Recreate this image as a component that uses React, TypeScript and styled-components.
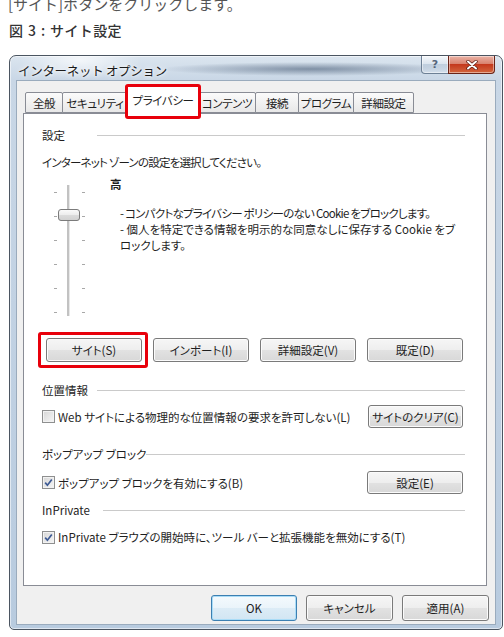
import styled, { createGlobalStyle } from "styled-components";

const GlobalStyle = createGlobalStyle`
  html, body {
    margin: 0;
    padding: 0;
    background: #fff;
  }
  body {
    font-family: "Noto Sans CJK JP", "Noto Sans", sans-serif;
    color: #1e1e1e;
  }
`;

const Page = styled.div`
  width: 504px;
  height: 637px;
  overflow: hidden;
  display: flex;
  flex-direction: column;
`;

const Lead = styled.p`
  margin: -7px 0 0 8px;
  font-size: 15px;
  line-height: 22px;
  color: #555;
  white-space: nowrap;
`;

const Caption = styled.p`
  margin: 4px 0 0 9px;
  font-size: 14px;
  line-height: 22px;
  font-weight: 500;
  letter-spacing: 0.4px;
  word-spacing: 1px;
  color: #333;
`;

const Window = styled.div`
  margin: 14px 0 0 9px;
  width: 494px;
  height: 575px;
  box-sizing: border-box;
  border: 1px solid #4b5561;
  border-radius: 7px 7px 5px 5px;
  padding: 0 6px 4px;
  display: flex;
  flex-direction: column;
  font-feature-settings: "palt";
  box-shadow: inset 0 0 0 1px rgba(255, 255, 255, 0.55);
  background:
    radial-gradient(ellipse 150px 7px at 300px 13px, rgba(72, 92, 118, 0.6), rgba(72, 92, 118, 0) 100%),
    radial-gradient(ellipse 60px 20px at 70px 4px, rgba(255, 255, 255, 0.7), rgba(255, 255, 255, 0) 100%),
    linear-gradient(#dbe5ef 0%, #c9d7e6 24px, #b8cbdf 100%);
`;

const TitleBar = styled.div`
  height: 24px;
  margin: 0 -6px;
  padding: 0 7px 0 8px;
  display: flex;
  align-items: flex-start;
`;

const Title = styled.span`
  padding-top: 7px;
  font-size: 12.5px;
  line-height: 16px;
  color: #1b1b1b;
  text-shadow: 0 0 6px #fff, 0 0 3px #fff;
  white-space: nowrap;
  font-feature-settings: normal;
  letter-spacing: -0.3px;
`;

const CaptionButtons = styled.div`
  margin-left: auto;
  display: flex;
`;

const CaptionButton = styled.div<{ $close?: boolean }>`
  width: ${(p) => (p.$close ? 47 : 28)}px;
  height: 18px;
  box-sizing: border-box;
  border: 1px solid ${(p) => (p.$close ? "#6a2418" : "#6d8095")};
  border-top: none;
  border-radius: ${(p) => (p.$close ? "0 0 4px 0" : "0 0 0 4px")};
  margin-left: ${(p) => (p.$close ? -1 : 0)}px;
  display: flex;
  align-items: center;
  justify-content: center;
  font-family: "DejaVu Sans", sans-serif;
  font-size: 11px;
  font-weight: 700;
  color: #55657a;
  box-shadow: inset 0 0 0 1px rgba(255, 255, 255, 0.45);
  background: ${(p) =>
    p.$close
      ? "linear-gradient(#eab3a6 0%, #d9836f 45%, #c4391d 50%, #d3673f 100%)"
      : "linear-gradient(rgba(255,255,255,0.7) 0%, rgba(224,232,241,0.6) 45%, rgba(183,199,216,0.7) 50%, rgba(214,225,237,0.8) 100%)"};
`;

const Client = styled.div`
  flex: 1;
  background: #f0f0f0;
  border: 1px solid #9aabbd;
  padding: 5px 6px 3px;
  display: flex;
  flex-direction: column;
`;

const TabRow = styled.div`
  height: 28px;
  margin-bottom: -1px;
  padding-left: 2px;
  display: flex;
  align-items: flex-start;
  position: relative;
  z-index: 1;
`;

const Tab = styled.div<{ $w: number; $active?: boolean }>`
  position: relative;
  box-sizing: border-box;
  width: ${(p) => p.$w + (p.$active ? 4 : 0)}px;
  height: ${(p) => (p.$active ? 28 : 21)}px;
  margin: ${(p) => (p.$active ? "0 -2px 0 -3px" : "6px 0 0 -1px")};
  padding-top: ${(p) => (p.$active ? 5 : 2)}px;
  border: 1px solid #898c95;
  border-bottom: ${(p) => (p.$active ? "none" : "1px solid #898c95")};
  border-radius: 2px 2px 0 0;
  background: ${(p) => (p.$active ? "#fff" : "linear-gradient(#fbfbfb, #e8e8e8)")};
  z-index: ${(p) => (p.$active ? 2 : 0)};
  font-size: 11.5px;
  line-height: 16px;
  letter-spacing: -0.4px;
  text-align: center;
  white-space: nowrap;

  &:first-child {
    margin-left: 0;
  }

  ${(p) =>
    p.$active &&
    `
    &::after {
      content: "";
      position: absolute;
      top: -3px;
      left: -1px;
      right: -1px;
      bottom: -5px;
      border: 3px solid #e8000b;
      border-radius: 3px;
    }
  `}
`;

const Panel = styled.div`
  height: 473px;
  box-sizing: border-box;
  margin-right: 2px;
  background: #fff;
  border: 1px solid #898c95;
  padding: 13px 21px 0 18px;
  display: flex;
  flex-direction: column;
  font-size: 11.5px;
  line-height: 16px;
`;

const GroupHeader = styled.div<{ $mt: number; $gap?: number }>`
  margin-top: ${(p) => p.$mt}px;
  height: 16px;
  display: flex;
  align-items: center;

  span {
    min-width: 55px;
    margin-right: ${(p) => p.$gap ?? 0}px;
    white-space: nowrap;
  }

  &::after {
    content: "";
    flex: 1;
    border-top: 1px solid #cacaca;
  }
`;

const Intro = styled.div`
  margin-top: 11px;
  white-space: nowrap;
  letter-spacing: -0.8px;
`;

const SliderArea = styled.div`
  margin-top: 6px;
  display: flex;
`;

const SliderSvg = styled.svg`
  margin-left: 6px;
  flex: none;
`;

const LevelText = styled.div`
  margin-left: 22px;
`;

const Level = styled.div`
  font-weight: 700;
`;

const Description = styled.div`
  margin-top: 13px;
  padding-left: 10px;
`;

const DescLine = styled.div<{ $tight?: boolean }>`
  white-space: nowrap;
  letter-spacing: ${(p) => (p.$tight ? -0.75 : 0)}px;
`;

const ButtonRow = styled.div`
  margin-top: 20px;
  padding-left: 4px;
  display: grid;
  grid-template-columns: repeat(4, 96px);
  column-gap: 11px;
`;

const Button = styled.div<{ $w?: number; $h?: number; $default?: boolean; $marked?: boolean }>`
  position: relative;
  box-sizing: border-box;
  width: ${(p) => (p.$w ? `${p.$w}px` : "auto")};
  height: ${(p) => p.$h ?? 23}px;
  border: 1px solid ${(p) => (p.$default ? "#3c7fb1" : "#7a7a7a")};
  border-radius: 3px;
  display: flex;
  align-items: center;
  justify-content: center;
  font-size: 11.5px;
  color: #1e1e1e;
  white-space: nowrap;
  flex: none;
  box-shadow: inset 0 0 0 1px ${(p) => (p.$default ? "#a9dcf7" : "#fbfbfb")};
  background: ${(p) =>
    p.$default
      ? "linear-gradient(#f4fafd 0%, #eaf4fa 50%, #dcecf6 50%, #d2e6f3 100%)"
      : "linear-gradient(#f6f6f6 0%, #eeeeee 50%, #e2e2e2 50%, #d8d8d8 100%)"};

  ${(p) =>
    p.$marked &&
    `
    &::after {
      content: "";
      position: absolute;
      top: -7px;
      bottom: -7px;
      left: -9px;
      right: -7px;
      border: 3px solid #e8000b;
      border-radius: 3px;
    }
  `}
`;

const CheckRow = styled.div<{ $mt: number; $h?: number }>`
  margin-top: ${(p) => p.$mt}px;
  height: ${(p) => p.$h ?? 23}px;
  display: flex;
  align-items: center;
  white-space: nowrap;

  ${Button} {
    margin-left: auto;
    margin-right: 2px;
  }
`;

const CheckBox = styled.span`
  flex: none;
  width: 13px;
  height: 13px;
  box-sizing: border-box;
  margin-right: 3px;
  border: 1px solid #8e8f8f;
  background: linear-gradient(135deg, #d6d6d6, #f6f6f6);
  box-shadow: inset 0 0 0 1px #f2f2f2;
  display: flex;
  align-items: center;
  justify-content: center;
`;

const DialogButtons = styled.div`
  margin-top: 9px;
  display: flex;
  justify-content: flex-end;
  gap: 9px;
`;

const tabs: { label: string; w: number; active?: boolean }[] = [
  { label: "全般", w: 38 },
  { label: "セキュリティ", w: 66 },
  { label: "プライバシー", w: 72, active: true },
  { label: "コンテンツ", w: 58 },
  { label: "接続", w: 44 },
  { label: "プログラム", w: 56 },
  { label: "詳細設定", w: 61 },
];

const ticks = [16, 40, 64, 88, 112, 136];

function Check({ checked }: { checked?: boolean }) {
  return (
    <CheckBox>
      {checked && (
        <svg width="9" height="9" viewBox="0 0 9 9">
          <path d="M1.2 4.6 L3.4 7.2 L7.8 1.4" fill="none" stroke="#3d5a94" strokeWidth="1.7" />
        </svg>
      )}
    </CheckBox>
  );
}

function PrivacySlider() {
  return (
    <SliderSvg width="40" height="142" viewBox="0 0 40 142">
      <defs>
        <linearGradient id="thumb" x1="0" y1="0" x2="0" y2="1">
          <stop offset="0" stopColor="#fbfbfb" />
          <stop offset="0.5" stopColor="#ececec" />
          <stop offset="0.5" stopColor="#dcdcdc" />
          <stop offset="1" stopColor="#d0d0d0" />
        </linearGradient>
      </defs>
      <rect x="19" y="9" width="2" height="131" fill="#c2c2c2" />
      <rect x="21" y="9" width="1" height="131" fill="#e8e8e8" />
      {ticks.map((y) => (
        <g key={y} fill="#a8a8a8">
          <rect x="6" y={y} width="3" height="1" />
          <rect x="34" y={y} width="3" height="1" />
        </g>
      ))}
      <rect x="10.5" y="33.5" width="21" height="11" rx="2.5" fill="url(#thumb)" stroke="#7b7b7b" />
    </SliderSvg>
  );
}

export default function App() {
  return (
    <Page>
      <GlobalStyle />
      <Lead>[サイト]ボタンをクリックします。</Lead>
      <Caption>図 3 : サイト設定</Caption>

      <Window>
        <TitleBar>
          <Title>インターネット オプション</Title>
          <CaptionButtons>
            <CaptionButton>?</CaptionButton>
            <CaptionButton $close>
              <svg width="12" height="10" viewBox="0 0 12 10">
                <path d="M2 1.5 L10 8.5 M10 1.5 L2 8.5" stroke="#5a1a10" strokeWidth="3.4" strokeLinecap="round" />
                <path d="M2 1.5 L10 8.5 M10 1.5 L2 8.5" stroke="#fff" strokeWidth="2" strokeLinecap="round" />
              </svg>
            </CaptionButton>
          </CaptionButtons>
        </TitleBar>

        <Client>
          <TabRow>
            {tabs.map((t) => (
              <Tab key={t.label} $w={t.w} $active={t.active}>
                {t.label}
              </Tab>
            ))}
          </TabRow>

          <Panel>
            <GroupHeader $mt={0}>
              <span>設定</span>
            </GroupHeader>
            <Intro>インターネット ゾーンの設定を選択してください。</Intro>

            <SliderArea>
              <PrivacySlider />
              <LevelText>
                <Level>高</Level>
                <Description>
                  <DescLine $tight>- コンパクトなプライバシー ポリシーのない Cookie をブロックします。</DescLine>
                  <DescLine>- 個人を特定できる情報を明示的な同意なしに保存する Cookie をブ</DescLine>
                  <DescLine>ロックします。</DescLine>
                </Description>
              </LevelText>
            </SliderArea>

            <ButtonRow>
              <Button $h={24} $marked>サイト(S)</Button>
              <Button $h={24}>インポート(I)</Button>
              <Button $h={24}>詳細設定(V)</Button>
              <Button $h={24}>既定(D)</Button>
            </ButtonRow>

            <GroupHeader $mt={20}>
              <span>位置情報</span>
            </GroupHeader>
            <CheckRow $mt={7}>
              <Check />
              Web サイトによる物理的な位置情報の要求を許可しない(L)
              <Button $w={95}>サイトのクリア(C)</Button>
            </CheckRow>

            <GroupHeader $mt={18}>
              <span>ポップアップ ブロック</span>
            </GroupHeader>
            <CheckRow $mt={9}>
              <Check checked />
              ポップアップ ブロックを有効にする(B)
              <Button $w={96}>設定(E)</Button>
            </CheckRow>

            <GroupHeader $mt={8} $gap={6}>
              <span>InPrivate</span>
            </GroupHeader>
            <CheckRow $mt={11} $h={16}>
              <Check checked />
              InPrivate ブラウズの開始時に、ツール バーと拡張機能を無効にする(T)
            </CheckRow>
          </Panel>

          <DialogButtons>
            <Button $w={86} $h={26} $default>OK</Button>
            <Button $w={87} $h={26}>キャンセル</Button>
            <Button $w={87} $h={26}>適用(A)</Button>
          </DialogButtons>
        </Client>
      </Window>
    </Page>
  );
}
